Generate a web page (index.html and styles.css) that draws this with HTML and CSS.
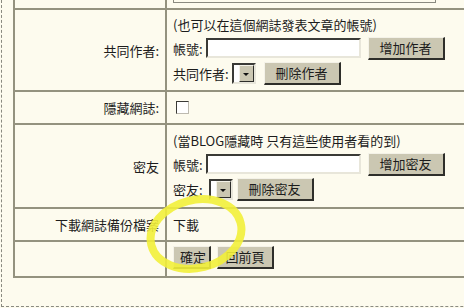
FILE: index.html
```html
<!DOCTYPE html>
<html>
<head>
  <meta charset="utf-8">
  <title>網誌設定</title>
  <link rel="stylesheet" href="styles.css">
</head>
<body>
  <div class="page">
    <table class="settings">
      <colgroup>
        <col class="col-label">
        <col class="col-field">
      </colgroup>
      <tr class="row-top">
        <td></td>
        <td><div class="textarea-tail"></div></td>
      </tr>
      <tr>
        <td class="label">共同作者:</td>
        <td class="field">
          <div class="line">(也可以在這個網誌發表文章的帳號)</div>
          <div class="line controls">
            <span class="name">帳號:</span>
            <span class="text-input"></span>
            <span class="btn btn-wide">增加作者</span>
          </div>
          <div class="line controls">
            <span class="name">共同作者:</span>
            <span class="select"><span class="select-box"></span><span class="select-arrow"></span></span>
            <span class="btn btn-wide">刪除作者</span>
          </div>
        </td>
      </tr>
      <tr class="row-short">
        <td class="label">隱藏網誌:</td>
        <td class="field"><span class="checkbox"></span></td>
      </tr>
      <tr class="row-friends">
        <td class="label">密友</td>
        <td class="field">
          <div class="line">(當BLOG隱藏時 只有這些使用者看的到)</div>
          <div class="line controls">
            <span class="name">帳號:</span>
            <span class="text-input"></span>
            <span class="btn btn-wide">增加密友</span>
          </div>
          <div class="line controls">
            <span class="name name-wide">密友:</span>
            <span class="select"><span class="select-box"></span><span class="select-arrow"></span></span>
            <span class="btn btn-wide btn-near">刪除密友</span>
          </div>
        </td>
      </tr>
      <tr class="row-short">
        <td class="label">下載網誌備份檔案</td>
        <td class="field">下載</td>
      </tr>
      <tr class="row-buttons">
        <td></td>
        <td class="field">
          <div class="controls">
            <span class="btn btn-ok">確定</span>
            <span class="btn btn-back">回前頁</span>
          </div>
        </td>
      </tr>
    </table>
    <svg class="marker" width="112" height="90" viewBox="0 0 112 90">
      <ellipse cx="55" cy="41" rx="46" ry="34" transform="rotate(-14 55 41)" fill="none" stroke="#f2f03a" stroke-width="8" opacity="0.9"/>
    </svg>
  </div>
</body>
</html>
```

FILE: styles.css
```css
body {
  margin: 0;
  background: #fdfbee;
  font-family: "Noto Sans CJK TC", "Liberation Sans", sans-serif;
  font-size: 13px;
  color: #1c1c1c;
  overflow: hidden;
}
.page {
  position: relative;
  width: 640px;
  margin-left: 1px;
  padding: 0 0 28px 11px;
  border-left: 1px dashed #8a8a80;
  border-bottom: 1px dashed #8a8a80;
}
.settings {
  border-collapse: collapse;
  table-layout: fixed;
  width: 600px;
  border: 2px solid #94927f;
  border-top: none;
}
.col-label {
  width: 152px;
}
.settings td {
  border: 2px solid #94927f;
  padding: 5px 6px;
  line-height: 19px;
  vertical-align: middle;
}
.row-top td {
  border-top: none;
  height: 8px;
  padding: 0 6px;
  vertical-align: top;
}
.textarea-tail {
  width: 261px;
  height: 2px;
  border: 1px solid #8a8a80;
  border-top: none;
}
.label {
  text-align: right;
  padding-right: 8px;
}
.line {
  height: 19px;
}
.line + .line {
  margin-top: 2px;
}
.controls {
  display: flex;
  align-items: center;
  height: 24px;
}
.line.controls + .line.controls {
  margin-top: 1px;
}
.row-friends td {
  padding-top: 6px;
  padding-bottom: 6px;
}
.row-short td {
  padding-top: 6px;
  padding-bottom: 6px;
}
.row-buttons td {
  padding-top: 3px;
  padding-bottom: 7px;
}
.name {
  margin-right: 3px;
}
.name-wide {
  margin-right: 6px;
}
.text-input {
  box-sizing: border-box;
  width: 155px;
  height: 20px;
  background: #fff;
  border: 2px solid #3a3a36;
  border-right-color: #e8e6da;
  border-bottom-color: #e8e6da;
  margin-right: 7px;
}
.btn {
  box-sizing: border-box;
  height: 23px;
  padding: 0 6px;
  background: #cbc7b2;
  border: 1px solid #f4f2e8;
  border-right: 2px solid #2e2e2a;
  border-bottom: 2px solid #2e2e2a;
  text-align: center;
  line-height: 19px;
  white-space: nowrap;
}
.btn-wide {
  width: 77px;
}
.btn-near {
  margin-left: -4px;
}
.btn-ok {
  width: 38px;
  margin-right: 6px;
}
.btn-back {
  width: 57px;
}
.select {
  display: flex;
  box-sizing: border-box;
  height: 21px;
  border: 2px solid #3a3a36;
  border-right-color: #e8e6da;
  border-bottom-color: #e8e6da;
  margin-right: 8px;
}
.select-box {
  width: 5px;
  background: #fff;
}
.select-arrow {
  position: relative;
  box-sizing: border-box;
  width: 15px;
  background: #cbc7b2;
  border: 1px solid #f4f2e8;
  border-right-color: #2e2e2a;
  border-bottom-color: #2e2e2a;
}
.select-arrow::after {
  content: "";
  position: absolute;
  left: 3px;
  top: 7px;
  border-left: 3px solid transparent;
  border-right: 3px solid transparent;
  border-top: 3px solid #111;
}
.checkbox {
  display: block;
  box-sizing: border-box;
  width: 13px;
  height: 13px;
  margin-left: 3px;
  background: #fff;
  border: 1px solid #3a3a36;
  border-right-color: #bdbab0;
  border-bottom-color: #bdbab0;
}
.marker {
  position: absolute;
  left: 139px;
  top: 193px;
}
```
